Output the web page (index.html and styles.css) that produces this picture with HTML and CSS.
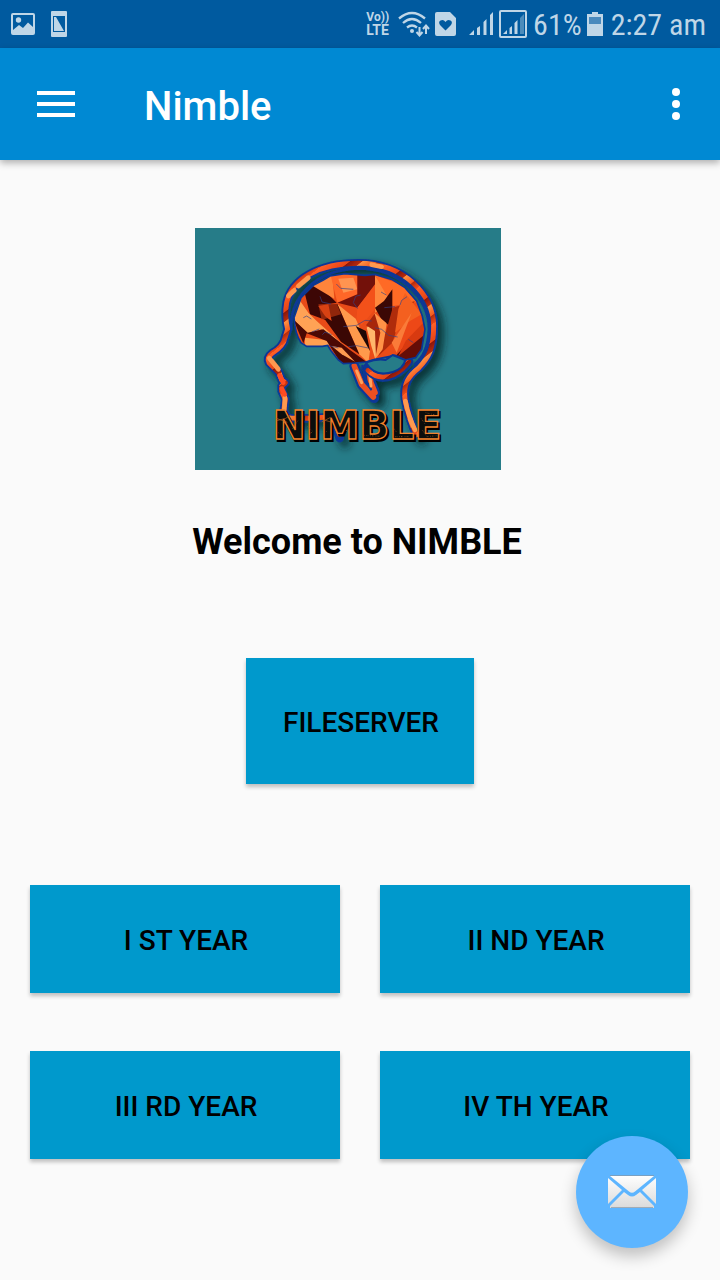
FILE: index.html
```html
<!DOCTYPE html>
<html lang="en">
<head>
<meta charset="utf-8">
<meta name="viewport" content="width=device-width, initial-scale=1">
<title>Nimble</title>
<link rel="stylesheet" href="styles.css">
</head>
<body>
<div class="status">
  <div class="status-group status-left">
    <svg width="24" height="22" viewBox="0 0 24 22" aria-hidden="true"><rect x="1" y="1" width="22" height="20" rx="1" fill="none" stroke="currentColor" stroke-width="2"/><circle cx="7.500" cy="7" r="2.700" fill="currentColor"/><path d="M2 20V17L8 12L12 15L17 9.500L22 14V20Z" fill="currentColor"/></svg>
    <svg width="16" height="26" viewBox="0 0 16 26" aria-hidden="true"><path fill="currentColor" fill-rule="evenodd" d="M1 0H15Q16 0 16 1V25Q16 26 15 26H1Q0 26 0 25V1Q0 0 1 0ZM2 5V21H14V5ZM3 6H5L13 20H3Z"/></svg>
  </div>
  <div class="status-group status-right">
    <div class="volte"><span class="volte-top">Vo))</span><span>LTE</span></div>
    <svg width="32" height="26" viewBox="0 0 32 26" aria-hidden="true"><g fill="none" stroke="currentColor" stroke-width="2.300"><path d="M1 7.500Q14-3.500 27 7.500M5 12Q14 4 23 12M9 16.500Q14 12.500 19 16.500"/></g><circle cx="14" cy="20" r="2" fill="currentColor"/><path d="M21.500 16V24M18.500 21L21.500 24.500L24.500 21M28 23V15M25 18L28 14.500L31 18" fill="none" stroke="currentColor" stroke-width="2"/></svg>
    <svg width="21" height="24" viewBox="0 0 21 24" aria-hidden="true"><path fill="currentColor" fill-rule="evenodd" d="M2 0H15L21 6V22Q21 24 19 24H2Q0 24 0 22V2Q0 0 2 0ZM10.500 18.500L16 13Q18 10 15.500 8.500Q12.500 7 10.500 10Q8.500 7 5.500 8.500Q3 10 5 13Z"/></svg>
    <svg class="signal" width="26" height="26" viewBox="0 0 26 26" aria-hidden="true"><path fill="currentColor" d="M1 24L6 19V24ZM9 17L12 15V24H9ZM15.500 11L18.500 8V24H15.500ZM22 4L25 1V24H22Z"/></svg>
    <svg width="28" height="28" viewBox="0 0 28 28" aria-hidden="true"><rect x="1" y="1" width="26" height="26" rx="1" fill="none" stroke="currentColor" stroke-width="2"/><path fill="currentColor" d="M4 24L8 20V24ZM10.500 18L13 16V24H10.500ZM15.500 13L18.500 10V24H15.500Z"/><path fill="currentColor" opacity=".4" d="M21 8L25 4V24H21Z"/></svg>
    <span class="status-text battery-text">61%</span>
    <svg class="battery" width="16" height="24" viewBox="0 0 16 24" aria-hidden="true"><path fill="currentColor" d="M5 0H11V2H16V24H0V2H5Z"/><path fill="#4a8abd" d="M2 5H14V12H2Z"/></svg>
    <span class="status-text">2:27 am</span>
  </div>
</div>
<header class="appbar">
  <button class="icon-button" type="button" aria-label="Open menu">
    <svg width="38" height="26" viewBox="0 0 38 26" fill="#fff" aria-hidden="true"><path d="M0 0H38V4H0ZM0 11H38V15H0ZM0 22H38V26H0Z"/></svg>
  </button>
  <h1 class="title">Nimble</h1>
  <button class="icon-button" type="button" aria-label="More options">
    <svg width="8" height="32" viewBox="0 0 8 32" fill="#fff" aria-hidden="true"><circle cx="4" cy="4" r="4"/><circle cx="4" cy="16" r="4"/><circle cx="4" cy="28" r="4"/></svg>
  </button>
</header>
<main class="content">
  <div class="logo-row">
    <svg class="logo" viewBox="0 6 918 726" role="img" aria-label="Nimble logo">
      <defs>
        <filter id="shade" x="-20%" y="-20%" width="150%" height="150%"><feDropShadow dx="16" dy="16" stdDeviation="13" flood-color="#001a22" flood-opacity=".85"/></filter>
        <clipPath id="brain"><path id="brain-shape" d="M297 275Q300 325 318 350L335 361H382L398 358L408 374L430 402L445 413L480 411L512 408L540 400L600 388L630 402L662 395L680 370L690 310L682 270L665 225L630 185L590 160L540 145L510 148L450 143L405 150L385 162L355 178L318 215Z"/></clipPath>
        <linearGradient id="skin" gradientUnits="userSpaceOnUse" x1="220" y1="100" x2="290" y2="190" spreadMethod="repeat"><stop offset="0" stop-color="#ff6028"/><stop offset=".35" stop-color="#e84415"/><stop offset=".37" stop-color="#8a1708"/><stop offset=".55" stop-color="#b62a0b"/><stop offset=".57" stop-color="#ff9142"/><stop offset=".8" stop-color="#f45a20"/><stop offset=".82" stop-color="#b52b0d"/><stop offset="1" stop-color="#ee4a1a"/></linearGradient>
      </defs>
      <rect y="6" width="918" height="726" fill="#267c88"/>
      <g filter="url(#shade)" fill="none" stroke-linejoin="round" stroke-linecap="round">
        <g stroke="#0b3796">
          <path id="head" stroke-width="26" d="M434 636L420 590L402 573L350 577L278 576L266 555L271 520L260 495V480L271 470L260 462L252 440L222 410Q214 395 232 381Q265 362 270 335L278 310Q268 270 275 230C290 160 370 112 490 112C630 112 716 210 716 300C716 370 700 395 672 425C640 450 624 475 630 520Q640 575 664 626"/>
          <path stroke-width="8" d="M289 310C283 225 350 132 490 127C615 127 702 215 702 310C699 365 685 392 660 415"/>
        </g>
        <path stroke="url(#skin)" stroke-width="15" d="M434 625L420 590L402 573L350 577L278 576L266 555L271 520L260 495V480L271 470L260 462L252 440L222 410Q214 395 232 381Q265 362 270 335L278 310Q268 270 275 230C290 160 370 112 490 112C630 112 716 210 716 300C716 370 700 395 672 425C640 450 624 475 630 520Q640 575 664 626"/>
        <path stroke="#ff9950" stroke-width="14" d="M223 397L250 430M270 515L268 550M631 525Q640 570 660 612M530 116L560 122M280 210L298 193M310 180L340 155"/>
        <path stroke="#ff4b20" stroke-width="14" d="M254 448L265 470M260 488L269 505"/>
        <path stroke="#0b3796" stroke-width="30" d="M478 420L500 475L537 516M519 425L527 468L540 500"/>
        <path stroke="#ed5020" stroke-width="17" d="M478 420L500 475L535 513M521 425L527 468L540 500"/>
        <path stroke="#0b3796" stroke-width="7" d="M502 420L512 462L528 490"/>
        <path stroke="#ffa15b" stroke-width="9" d="M485 435L500 470M524 443L528 480"/>
        <path stroke="#0b3796" stroke-width="28" d="M519 430Q550 465 595 446Q624 432 641 407"/>
        <path stroke="url(#skin)" stroke-width="15" d="M519 433Q550 465 595 446Q624 432 641 407"/>
      </g>
      <g clip-path="url(#brain)">
        <path fill="#e94b18" d="M280 130H710V430H280Z"/>
        <path fill="#3d0705" d="M330 205L365 170L425 230L370 240L400 285L345 265Z"/>
        <path fill="#ff843b" d="M345 175L412 145L418 218Z"/>
        <path fill="#ff6728" d="M405 140H487V220L427 230Z"/>
        <path fill="#ff9450" d="M430 158L475 155L487 190L445 200Z"/>
        <path fill="#73110a" d="M487 140H540V178L487 245L427 230L487 205Z"/>
        <path fill="#f3511a" d="M487 245L540 175V250L500 298L484 285Z"/>
        <path fill="#ff873c" d="M540 150L593 200L575 240L540 260Z"/>
        <path fill="#ff6a25" d="M540 148L630 180L665 230L593 240Z"/>
        <path fill="#3b0805" d="M540 245L567 225L592 190V300L565 290Z"/>
        <path fill="#b02c0b" d="M593 245L660 225L615 280L592 350L550 390L575 310Z"/>
        <path fill="#ed4817" d="M660 225L690 300L625 370L595 365L625 285Z"/>
        <path fill="#650d07" d="M590 402L635 355L692 310L690 400Z"/>
        <path fill="#d83a10" d="M632 345L690 285V325L610 390Z"/>
        <path fill="#ffa255" d="M290 275L312 220L340 260L365 285L460 370L380 310L338 322Z"/>
        <path fill="#ff9f50" d="M330 335L420 345L385 365H330Z"/>
        <path fill="#4b0904" d="M295 280L338 320L385 310L465 372L515 408L440 415L395 345L335 322L325 352Z"/>
        <path fill="#ff9a4c" d="M427 234L482 278L525 375L520 410L493 385Z"/>
        <path fill="#3a0704" d="M427 234L493 385L438 347L375 260L410 285L400 235Z"/>
        <path fill="#1f0705" d="M482 300L513 315L525 375Z"/>
        <path fill="#ffb76b" d="M515 305L537 284L550 350L541 400L529 360Z"/>
        <path fill="#a7260b" d="M513 298L540 262L560 305L543 395L540 315Z"/>
        <path fill="#ff9247" d="M538 260L575 292L563 370L540 400L556 320Z"/>
        <path fill="#f4601f" d="M630 200L680 265L645 285L600 320L610 250Z"/>
        <path fill="#ff9b51" d="M410 360L440 365L480 407L440 385Z"/>
        <path fill="#cc3c11" d="M370 235L425 232L438 265L380 282Z" opacity=".6"/>
        <path fill="#fa7b39" d="M590 350L650 260L605 380Z"/>
        <path fill="none" stroke="#354287" stroke-width="2" d="M424 174L437 187L475 190M375 211L381 228L408 234M488 248L475 230L482 211L497 207M325 275L335 270L349 279M350 318L373 309M382 326L390 318L410 326M445 302L485 298L510 283L530 285M540 305L560 310L581 328L608 333M558 198L574 207M568 245L600 242M615 237L620 223L636 212M460 362L485 359L520 366M405 360L430 366M640 340L655 350"/>
      </g>
      <use href="#brain-shape" fill="none" stroke="#0b3796" stroke-width="5"/>
      <path fill="#267c88" stroke="#0b3796" stroke-width="6" stroke-linejoin="round" d="M513 410Q545 397 572 402L593 387L631 402Q625 428 594 438Q540 455 513 410Z"/>
      <g class="logo-text">
        <text x="238" y="644" fill="#000" stroke="#000" stroke-width="6">NIMBLE</text>
        <text x="233" y="638" fill="#0b0d0c" stroke="#f1822d" stroke-width="4">NIMBLE</text>
      </g>
      <g fill="none" stroke="#b9621e" stroke-width="2"><path d="M244 577L277 589M245 584L272 577L288 567M376 579L408 588M380 588L407 574"/><path stroke-dasharray="2 4 3 2 1 5" d="M250 620L265 632M292 608L310 582M338 602L352 615L342 630M381 604L395 617M448 610L466 620M508 628L557 631M545 610L565 600M593 603L606 620M595 632H642M679 578L690 594M682 612L696 632L724 629M692 560L724 568"/></g>
    </svg>
  </div>
  <h2 class="welcome">Welcome to NIMBLE</h2>
  <button class="tile tile-server" type="button">FILESERVER</button>
  <div class="years">
    <button class="tile" type="button">I ST YEAR</button>
    <button class="tile" type="button">II ND YEAR</button>
    <button class="tile" type="button">III RD YEAR</button>
    <button class="tile" type="button">IV TH YEAR</button>
  </div>
</main>
<button class="fab" type="button" aria-label="Send email">
  <svg width="48" height="34" viewBox="0 0 48 34" aria-hidden="true"><defs><linearGradient id="paper" gradientUnits="userSpaceOnUse" x1="0" y1="0" x2="0" y2="34"><stop offset="0" stop-color="#fff"/><stop offset="1" stop-color="#d9d9d9"/></linearGradient></defs><g fill="url(#paper)"><path d="M2 1H46L27 16.500Q24 19 21 16.500Z"/><path d="M0 3L14 15L0 29Z"/><path d="M48 3L34 15L48 29Z"/><path d="M16 17L20 20Q24 23 28 20L32 17L46 31V33H2V31Z"/></g><path d="M2 .500H46M3 32.500H45" fill="none" stroke="#8797a6" stroke-width="1" opacity=".7"/></svg>
</button>
</body>
</html>
```
FILE: styles.css
```css
* { box-sizing: border-box; }

body {
  margin: 0;
  min-height: 100vh;
  background: #fafafa;
  color: #000;
  font-family: Roboto, "Liberation Sans", sans-serif;
}

button {
  border: 0;
  padding: 0;
  font: inherit;
  color: inherit;
  cursor: pointer;
}

svg { display: block; flex: none; }

.status {
  display: flex;
  justify-content: space-between;
  align-items: center;
  height: 48px;
  padding: 0 14px 0 11px;
  background: #005a9f;
  color: #bfd6e7;
}

.status-group { display: flex; align-items: center; }
.status-left { gap: 16px; }
.status-right { gap: 5px; }

.status-text {
  padding-top: 1px;
  font-family: "Roboto Condensed", Roboto, sans-serif;
  font-size: 30px;
  line-height: 47px;
  white-space: nowrap;
}

.battery-text { margin-left: 1px; }
.battery { margin-right: 3px; }
.signal { margin-left: 7px; }

.volte {
  display: flex;
  flex-direction: column;
  margin-right: 4px;
  font-size: 14px;
  font-weight: 700;
  line-height: 13px;
}

.volte-top { font-size: 12px; }

.appbar {
  display: flex;
  align-items: center;
  height: 112px;
  padding: 0 40px 0 37px;
  background: #0089d3;
  color: #fff;
  box-shadow: 0 3px 7px rgba(0, 0, 0, .3);
}

.icon-button {
  display: flex;
  align-items: center;
  height: 48px;
  background: none;
}

.title {
  flex: 1;
  margin: 6px 0 0 69px;
  font-size: 40px;
  font-weight: 500;
  line-height: 48px;
}

.content {
  display: flex;
  flex-direction: column;
  align-items: center;
  padding: 68px 30px 48px;
}

.logo-row { padding-right: 24px; }
.logo { width: 306px; height: 242px; }

.logo-text {
  font-family: "DejaVu Sans", sans-serif;
  font-size: 118px;
  font-weight: 700;
}

.welcome {
  margin: 48px 0 0;
  padding-right: 6px;
  font-size: 36px;
  font-weight: 700;
  line-height: 48px;
}

.tile {
  height: 108px;
  padding: 3px 0 0 2px;
  background: #0099cc;
  font-size: 28px;
  font-weight: 500;
  box-shadow: 0 3px 4px rgba(0, 0, 0, .24);
}

.tile-server {
  height: 126px;
  margin-top: 92px;
  padding: 3px 35px 0 37px;
}

.years {
  display: grid;
  grid-template-columns: 1fr 1fr;
  gap: 58px 40px;
  width: 100%;
  margin-top: 101px;
}

.fab {
  position: fixed;
  right: 32px;
  bottom: 32px;
  display: flex;
  align-items: center;
  justify-content: center;
  width: 112px;
  height: 112px;
  border-radius: 50%;
  background: #5db5ff;
  box-shadow: 0 8px 16px rgba(0, 0, 0, .24);
}
```
